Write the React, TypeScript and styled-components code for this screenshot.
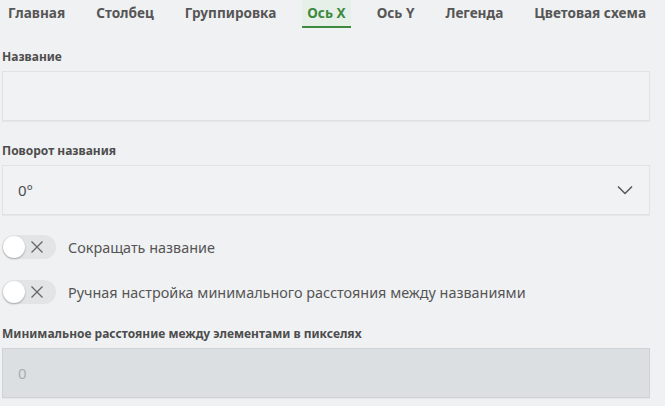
import React from 'react'
import styled, { createGlobalStyle } from 'styled-components'

const GlobalStyle = createGlobalStyle`
  html, body {
    margin: 0;
    padding: 0;
    background: #f0f1f3;
    font-family: 'Noto Sans', 'Open Sans', sans-serif;
    color: #4f4f4f;
  }
`

const tabs = ['Главная', 'Столбец', 'Группировка', 'Ось X', 'Ось Y', 'Легенда', 'Цветовая схема']

const App = () => {
  return (
    <>
      <GlobalStyle />
      <Page>
        <Tabs>
          {tabs.map((t) => (
            <Tab key={t} active={t === 'Ось X'}>
              {t}
            </Tab>
          ))}
        </Tabs>

        <Field top={21}>
          <Label>Название</Label>
          <Input />
        </Field>

        <Field top={22}>
          <Label>Поворот названия</Label>
          <Select>
            <span>0°</span>
            <svg width="16" height="10" viewBox="0 0 16 10">
              <path d="M1 1.5l7 7 7-7" fill="none" stroke="#555" strokeWidth="1.5" />
            </svg>
          </Select>
        </Field>

        <ToggleRow top={20}>
          <Toggle>
            <Knob />
            <Cross />
          </Toggle>
          <ToggleLabel>Сокращать название</ToggleLabel>
        </ToggleRow>

        <ToggleRow top={21}>
          <Toggle>
            <Knob />
            <Cross />
          </Toggle>
          <ToggleLabel>Ручная настройка минимального расстояния между названиями</ToggleLabel>
        </ToggleRow>

        <Field top={22}>
          <Label>Минимальное расстояние между элементами в пикселях</Label>
          <Input disabled>0</Input>
        </Field>
      </Page>
    </>
  )
}

const Cross = () => (
  <svg width="14" height="14" viewBox="0 0 14 14">
    <path d="M1.5 1.5l11 11M12.5 1.5l-11 11" stroke="#666" strokeWidth="1.3" fill="none" />
  </svg>
)

export default App

const Page = styled.div`
  width: 665px;
  height: 406px;
  overflow: hidden;
  box-sizing: border-box;
  padding: 0 15px 0 2px;
`

const Tabs = styled.div`
  display: flex;
  gap: 21px;
  padding-left: 1px;
`

const Tab = styled.div<{ active?: boolean }>`
  height: 28px;
  box-sizing: border-box;
  padding: 3px 5px 0;
  font-size: 13.6px;
  font-weight: 700;
  line-height: 20px;
  white-space: nowrap;
  color: ${(p) => (p.active ? '#3d8a3f' : '#565656')};
  background: ${(p) => (p.active ? '#e6efe8' : 'transparent')};
  border-bottom: 2px solid ${(p) => (p.active ? '#3d8a3f' : 'transparent')};
`

const Field = styled.div<{ top: number }>`
  display: flex;
  flex-direction: column;
  margin-top: ${(p) => p.top}px;
`

const Label = styled.div`
  font-size: 12px;
  font-weight: 700;
  line-height: 16px;
  color: #4d4d4d;
  margin-bottom: 6px;
`

const Input = styled.div<{ disabled?: boolean }>`
  height: 50px;
  box-sizing: border-box;
  border: 1px solid ${(p) => (p.disabled ? '#cfd3d6' : '#e0e2e4')};
  background: ${(p) => (p.disabled ? '#dcdfe1' : '#f1f2f4')};
  box-shadow: 0 1px 1px rgba(0, 0, 0, 0.04);
  padding: 0 15px;
  display: flex;
  align-items: center;
  font-size: 15px;
  color: #a9adb0;
`

const Select = styled(Input)`
  justify-content: space-between;
  color: #4f4f4f;
  padding-right: 16px;
`

const ToggleRow = styled.div<{ top: number }>`
  display: flex;
  align-items: center;
  gap: 12px;
  margin-top: ${(p) => p.top}px;
`

const Toggle = styled.div`
  width: 54px;
  height: 24px;
  border-radius: 12px;
  background: #e2e4e6;
  display: flex;
  align-items: center;
  justify-content: space-between;
  padding: 0 12px 0 1px;
  box-sizing: border-box;
`

const Knob = styled.div`
  width: 22px;
  height: 22px;
  border-radius: 50%;
  background: #fff;
  box-shadow: 0 1px 2px rgba(0, 0, 0, 0.3);
`

const ToggleLabel = styled.div`
  font-size: 14.4px;
  color: #555;
  white-space: nowrap;
`
